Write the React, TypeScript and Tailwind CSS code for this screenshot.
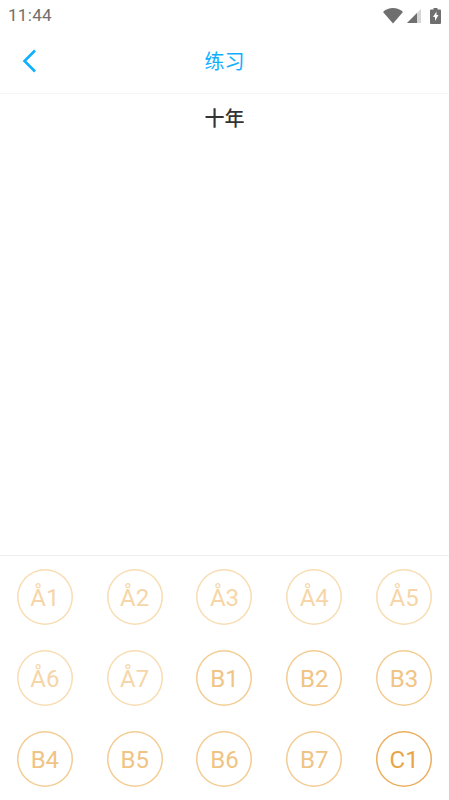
import React from 'react';

const notes = [
  { label: 'Å1', tone: 'a' },
  { label: 'Å2', tone: 'a' },
  { label: 'Å3', tone: 'a' },
  { label: 'Å4', tone: 'a' },
  { label: 'Å5', tone: 'a' },
  { label: 'Å6', tone: 'a' },
  { label: 'Å7', tone: 'a' },
  { label: 'B1', tone: 'b' },
  { label: 'B2', tone: 'b' },
  { label: 'B3', tone: 'b' },
  { label: 'B4', tone: 'b' },
  { label: 'B5', tone: 'b' },
  { label: 'B6', tone: 'b' },
  { label: 'B7', tone: 'b' },
  { label: 'C1', tone: 'c' },
];

const toneClass: Record<string, string> = {
  a: 'shadow-[inset_0_0_0_1.5px_#f8dcb2] text-[#f6d6a8]',
  b: 'shadow-[inset_0_0_0_1.5px_#f3cc92] text-[#f0c484]',
  c: 'shadow-[inset_0_0_0_1.5px_#ebaf5f] text-[#e8a548]',
};

const App: React.FC = () => {
  return (
    <div className="w-[449px] h-[800px] flex flex-col bg-white overflow-hidden font-['Roboto','Noto_Sans_CJK_SC',sans-serif]">
      {/* Status bar */}
      <div className="h-[31px] flex items-center justify-between px-2 text-[#6f6f6f]">
        <span className="text-[17px] tracking-[0.3px]">11:44</span>
        <div className="flex items-center gap-[4px]">
          <svg width="20" height="16" viewBox="0 0 20 16">
            <path d="M0 4C2.800 1.600 6.200 0 10 0s7.200 1.600 10 4L10 15.500z" fill="#6f6f6f" />
          </svg>
          <svg width="14" height="14" viewBox="0 0 14 14">
            <path d="M14 0V14H0z" fill="#d6d6d6" />
            <path d="M10 4V14H0z" fill="#6f6f6f" />
          </svg>
          <svg width="11" height="16" viewBox="0 0 11 16" className="ml-[5px]">
            <path d="M3.500 0h4v1.500H10a1 1 0 0 1 1 1V15a1 1 0 0 1-1 1H1a1 1 0 0 1-1-1V2.500a1 1 0 0 1 1-1h2.500z" fill="#6f6f6f" />
            <path d="M6.500 3.500L3 9h2v4l3.500-6h-2z" fill="#fff" />
          </svg>
        </div>
      </div>

      {/* Nav */}
      <div className="relative h-[63px] flex items-center justify-center border-b border-[#f5f5f5]">
        <svg className="absolute left-[22px] top-[18px]" width="15" height="24" viewBox="0 0 15 24" fill="none">
          <path d="M13 1.500L2.500 12 13 22.500" stroke="#0fb0ff" strokeWidth="2.600" />
        </svg>
        <span className="text-[20px] text-[#0fb0ff]">练习</span>
      </div>

      {/* Question */}
      <div className="flex-1 flex justify-center pt-[10px]">
        <span className="text-[20px] leading-[30px] font-medium text-[#333333]">十年</span>
      </div>

      {/* Keyboard */}
      <div className="h-[245px] border-t border-[#eeeeee] pt-[13px] grid grid-cols-5 gap-y-[25px] content-start">
        {notes.map((n) => (
          <div key={n.label} className="flex justify-center">
            <div className={`w-[56px] h-[56px] rounded-full flex items-center justify-center pt-[1px] text-[24px] ${toneClass[n.tone]}`}>
              {n.label}
            </div>
          </div>
        ))}
      </div>
    </div>
  );
};

export default App;
